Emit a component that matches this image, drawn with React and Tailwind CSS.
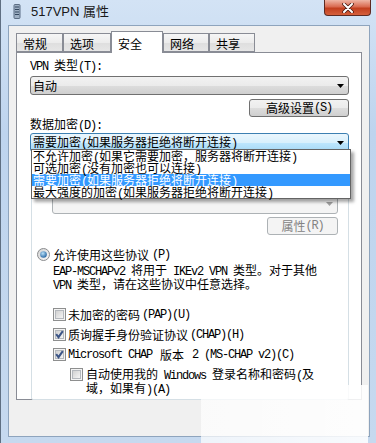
import React from "react";

// split text into half-width (ascii) and full-width runs so latin gets a 6px mono advance like SimSun
function T({ text }) {
    const runs = [];
    let cur = "";
    let wide = null;
    for (const ch of text) {
        const w = ch.charCodeAt(0) > 0x7f;
        if (wide === null || w === wide) {
            cur += ch;
            wide = w;
        } else {
            runs.push([wide, cur]);
            cur = ch;
            wide = w;
        }
    }
    if (cur) runs.push([wide, cur]);
    return runs.map(([w, t], i) =>
        w ? (
            <span key={i}>{t}</span>
        ) : (
            <span key={i} className="font-['Liberation_Mono',monospace] text-[12px] tracking-[-1.2px] whitespace-pre">
                {t}
            </span>
        )
    );
}

const Arrow = ({ color = "#000" }) => (
    <svg width="7" height="4" viewBox="0 0 7 4">
        <path d="M0 0 H7 L3.5 4 Z" fill={color} />
    </svg>
);

const Checkbox = ({ checked }) => (
    <svg width="13" height="13" viewBox="0 0 13 13" className="shrink-0">
        <defs>
            <linearGradient id="cbg" x1="0" y1="0" x2="1" y2="1">
                <stop offset="0" stopColor="#cfcfcf" />
                <stop offset="1" stopColor="#f7f7f7" />
            </linearGradient>
        </defs>
        <rect x="0.5" y="0.5" width="12" height="12" fill="#f4f4f4" stroke="#8e8f8f" />
        <rect x="2.5" y="2.5" width="8" height="8" fill="url(#cbg)" stroke="#b4b8bd" />
        {checked && <path d="M3.2 6.2 L5.5 9.2 L9.8 3.2" stroke="#3c5587" strokeWidth="2" fill="none" />}
    </svg>
);

const Radio = () => (
    <svg width="13" height="13" viewBox="0 0 13 13" className="shrink-0">
        <defs>
            <linearGradient id="rf" x1="0" y1="0" x2="1" y2="1">
                <stop offset="0" stopColor="#d2d2d2" />
                <stop offset="1" stopColor="#fbfbfb" />
            </linearGradient>
            <radialGradient id="rb" cx="0.4" cy="0.35" r="0.7">
                <stop offset="0" stopColor="#b7e0f8" />
                <stop offset="1" stopColor="#1f5f9e" />
            </radialGradient>
        </defs>
        <circle cx="6.5" cy="6.5" r="6" fill="url(#rf)" stroke="#8a8c8e" />
        <circle cx="6.5" cy="6.5" r="3.3" fill="url(#rb)" />
    </svg>
);

const tabs = [
    { label: "常规", w: "w-[47px]" },
    { label: "选项", w: "w-[48px]" },
    { label: "安全", w: "w-[52px]", active: true },
    { label: "网络", w: "w-[46px]" },
    { label: "共享", w: "w-[46px]" },
];

const listItems = [
    "不允许加密(如果它需要加密，服务器将断开连接)",
    "可选加密(没有加密也可以连接)",
    "需要加密(如果服务器拒绝将断开连接)",
    "最大强度的加密(如果服务器拒绝将断开连接)",
];

export default function App() {
    return (
        <div className="relative w-[376px] h-[443px] overflow-hidden border-l border-[#5f6f82] bg-[linear-gradient(#d3e3f5,#bed4ee_30%,#c6d9ef)] font-['Noto_Sans_CJK_SC',sans-serif] text-[12px] leading-[12px] text-black">
            {/* Title bar */}
            <div className="h-[25px] flex items-start">
                <svg width="9" height="15" viewBox="0 0 9 15" className="ml-[12px] mt-[4px]">
                    <rect x="1" y="0.5" width="6" height="14" rx="1" fill="#9eb0c4" stroke="#5b6d83" />
                    <path d="M2 3 H6 M2 5.5 H6 M2 8 H6 M2 10.5 H6" stroke="#33475f" strokeWidth="1" />
                </svg>
                <div className="ml-[9px] mt-[4px] font-['Liberation_Sans','Noto_Sans_CJK_SC',sans-serif] text-[13px] leading-[15px] text-[#1a1a1a]">
                    517VPN 属性
                </div>
                <div className="ml-auto mr-[5px] w-[47px] h-[16px] rounded-b-[4px] border border-t-0 border-[#5d2a22] bg-[linear-gradient(#efb6a6,#d96a50_45%,#c23f1f_55%,#d5603c)] flex items-center justify-center">
                    <svg width="12" height="10" viewBox="0 0 12 10">
                        <path d="M2 1 L10 9 M10 1 L2 9" stroke="#4a1a12" strokeWidth="3.6" strokeLinecap="round" />
                        <path d="M2 1 L10 9 M10 1 L2 9" stroke="#fff" strokeWidth="2" strokeLinecap="round" />
                    </svg>
                </div>
            </div>

            {/* Client area */}
            <div className="ml-[7px] mr-[6px] h-[412px] border border-[#8ea4bd] bg-[#f0f0f0]">
                {/* Tabs */}
                <div className="flex items-end h-[21px] mt-[5px] pl-[7px]">
                    {tabs.map((t) =>
                        t.active ? (
                            <div
                                key={t.label}
                                className={`${t.w} h-[22px] -mb-px relative z-10 border border-b-0 border-[#898c95] bg-white pl-[6px] pt-[6px]`}
                            >
                                {t.label}
                            </div>
                        ) : (
                            <div
                                key={t.label}
                                className={`${t.w} h-[19px] border border-[#898c95] bg-[linear-gradient(#f6f6f6,#ececec_50%,#dedede_51%,#e6e6e6)] pl-[6px] pt-[4px]`}
                            >
                                {t.label}
                            </div>
                        )
                    )}
                </div>

                {/* Panel */}
                <div className="relative ml-[7px] w-[346px] h-[348px] border border-[#898c95] bg-white pl-[13px] pr-[12px] pt-[6px]">
                    <div>
                        <T text="VPN 类型(T):" />
                    </div>
                    <div className="mt-[3px] h-[19px] rounded-[3px] border border-[#707070] bg-[linear-gradient(#f2f2f2,#ebebeb_50%,#dddddd_51%,#cfcfcf)] flex items-center pl-[2px] pr-[4px]">
                        <span className="mt-[1px]">自动</span>
                        <span className="ml-auto">
                            <Arrow />
                        </span>
                    </div>
                    <div className="mt-[4px] flex justify-end">
                        <div className="w-[100px] h-[18px] rounded-[3px] border border-[#707070] bg-[linear-gradient(#f2f2f2,#ebebeb_50%,#dddddd_51%,#cfcfcf)] flex items-center justify-center">
                            <T text="高级设置(S)" />
                        </div>
                    </div>
                    <div className="mt-[1px]">
                        <T text="数据加密(D):" />
                    </div>
                    <div className="mt-[1px] h-[19px] rounded-[3px] border border-[#3c7fb1] bg-[linear-gradient(#eaf6fd,#d9f0fc_50%,#bee6fd_51%,#a7d9f5)] flex items-center pl-[2px] pr-[4px]">
                        <span className="mt-[1px]">
                            <T text="需要加密(如果服务器拒绝将断开连接)" />
                        </span>
                        <span className="ml-auto">
                            <Arrow />
                        </span>
                    </div>

                    {/* Authentication group (its top part sits under the open list) */}
                    <div className="mt-[9px] ml-[1px] border border-[#d5dfe5] rounded-[2px] pb-[3px]">
                        <div className="h-[5px]" />
                        <div className="mt-[7px] ml-[5px] h-[12px] flex items-center">
                            <svg width="13" height="13" viewBox="0 0 13 13">
                                <circle cx="6.5" cy="6.5" r="6" fill="#f4f4f4" stroke="#8a8c8e" />
                            </svg>
                        </div>
                        <div className="mt-[8px] ml-[20px] mr-[10px] h-[20px] rounded-[3px] border border-[#adb2b5] bg-[#f4f4f4] flex items-center justify-end pr-[4px]">
                            <Arrow color="#a0a0a0" />
                        </div>
                        <div className="mt-[3px] mr-[10px] flex justify-end">
                            <div className="w-[71px] h-[18px] rounded-[3px] border border-[#adb2b5] bg-[#f4f4f4] flex items-center justify-center text-[#838383]">
                                <T text="属性(R)" />
                            </div>
                        </div>
                        <div className="mt-[13px] ml-[5px] flex items-center gap-[3px]">
                            <Radio />
                            <T text="允许使用这些协议(P)" />
                        </div>
                        <div className="mt-[3px] ml-[21px]">
                            <div>
                                <T text="EAP-MSCHAPv2 将用于 IKEv2 VPN 类型。对于其他" />
                            </div>
                            <div>
                                <T text="VPN 类型，请在这些协议中任意选择。" />
                            </div>
                        </div>
                        <div className="mt-[16px] ml-[21px] flex items-center gap-[2px]">
                            <Checkbox />
                            <T text="未加密的密码(PAP)(U)" />
                        </div>
                        <div className="mt-[7px] ml-[21px] flex items-center gap-[2px]">
                            <Checkbox checked />
                            <T text="质询握手身份验证协议(CHAP)(H)" />
                        </div>
                        <div className="mt-[7px] ml-[21px] flex items-center gap-[2px]">
                            <Checkbox checked />
                            <T text="Microsoft CHAP 版本 2 (MS-CHAP v2)(C)" />
                        </div>
                        <div className="mt-[7px] ml-[38px] flex items-start gap-[3px]">
                            <Checkbox />
                            <div>
                                <div>
                                    <T text="自动使用我的 Windows 登录名称和密码(及" />
                                </div>
                                <div>
                                    <T text="域，如果有)(A)" />
                                </div>
                            </div>
                        </div>
                    </div>

                    {/* Open drop-down list */}
                    <div className="absolute left-[14px] top-[96px] w-[320px] h-[50px] border border-[#646464] bg-white shadow-[3px_3px_3px_rgba(0,0,0,0.35)] z-20">
                        {listItems.map((item, i) => (
                            <div
                                key={item}
                                className={`h-[12px] pl-[1px] whitespace-nowrap ${i === 2 ? "bg-[#3399ff] text-white" : ""}`}
                            >
                                <T text={item} />
                            </div>
                        ))}
                    </div>
                </div>
            </div>

            {/* whitish watermark patch, bottom right */}
            <div className="absolute left-[200px] top-[385px] w-[167px] h-[58px] bg-[linear-gradient(90deg,rgba(255,255,255,0.7),rgba(255,255,255,0.88))]" />
        </div>
    );
}
